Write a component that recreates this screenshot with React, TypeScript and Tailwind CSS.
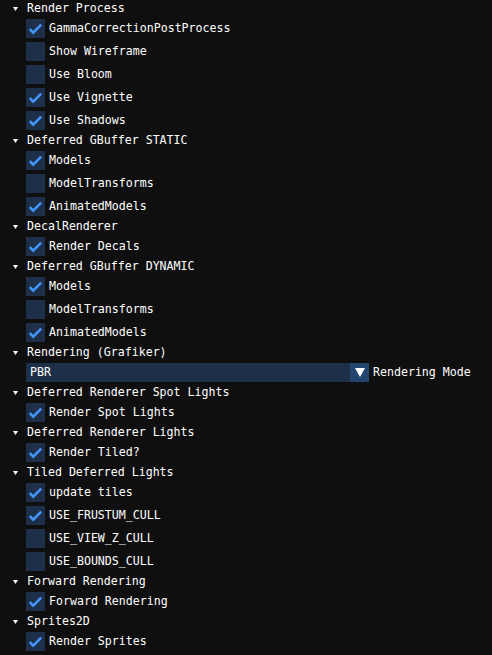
import React from 'react';

type Item =
  | { kind: 'check'; label: string; on: boolean }
  | { kind: 'combo'; value: string; label: string };

type Section = { title: string; items: Item[] };

const SECTIONS: Section[] = [
  {
    title: 'Render Process',
    items: [
      { kind: 'check', label: 'GammaCorrectionPostProcess', on: true },
      { kind: 'check', label: 'Show Wireframe', on: false },
      { kind: 'check', label: 'Use Bloom', on: false },
      { kind: 'check', label: 'Use Vignette', on: true },
      { kind: 'check', label: 'Use Shadows', on: true },
    ],
  },
  {
    title: 'Deferred GBuffer STATIC',
    items: [
      { kind: 'check', label: 'Models', on: true },
      { kind: 'check', label: 'ModelTransforms', on: false },
      { kind: 'check', label: 'AnimatedModels', on: true },
    ],
  },
  { title: 'DecalRenderer', items: [{ kind: 'check', label: 'Render Decals', on: true }] },
  {
    title: 'Deferred GBuffer DYNAMIC',
    items: [
      { kind: 'check', label: 'Models', on: true },
      { kind: 'check', label: 'ModelTransforms', on: false },
      { kind: 'check', label: 'AnimatedModels', on: true },
    ],
  },
  { title: 'Rendering (Grafiker)', items: [{ kind: 'combo', value: 'PBR', label: 'Rendering Mode' }] },
  { title: 'Deferred Renderer Spot Lights', items: [{ kind: 'check', label: 'Render Spot Lights', on: true }] },
  { title: 'Deferred Renderer Lights', items: [{ kind: 'check', label: 'Render Tiled?', on: true }] },
  {
    title: 'Tiled Deferred Lights',
    items: [
      { kind: 'check', label: 'update tiles', on: true },
      { kind: 'check', label: 'USE_FRUSTUM_CULL', on: true },
      { kind: 'check', label: 'USE_VIEW_Z_CULL', on: false },
      { kind: 'check', label: 'USE_BOUNDS_CULL', on: false },
    ],
  },
  { title: 'Forward Rendering', items: [{ kind: 'check', label: 'Forward Rendering', on: true }] },
  { title: 'Sprites2D', items: [{ kind: 'check', label: 'Render Sprites', on: true }] },
];

export default function App() {
  return (
    <div
      className="w-[492px] h-[655px] overflow-hidden bg-[#0f0f0f] text-[#ffffff] flex flex-col gap-[4px] pt-[2px] text-[11.6px] leading-[13px]"
      style={{ fontFamily: "'DejaVu Sans Mono', 'Liberation Mono', monospace" }}
    >
      {SECTIONS.map((s, i) => (
        <React.Fragment key={i}>
          <Header title={s.title} />
          {s.items.map((it, j) =>
            it.kind === 'check' ? (
              <CheckRow key={j} label={it.label} on={it.on} />
            ) : (
              <ComboRow key={j} value={it.value} label={it.label} />
            )
          )}
        </React.Fragment>
      ))}
    </div>
  );
}

function Header({ title }: { title: string }) {
  return (
    <div className="h-[13px] flex items-center shrink-0">
      <div className="w-[27px] flex justify-center pl-[3px]">
        <svg width="5" height="4" viewBox="0 0 5 4">
          <path d="M0 0 L5 0 L2.5 4 Z" fill="#ffffff" />
        </svg>
      </div>
      <span className="whitespace-pre">{title}</span>
    </div>
  );
}

function CheckRow({ label, on }: { label: string; on: boolean }) {
  return (
    <div className="h-[19px] flex items-center pl-[26px] gap-[4px] shrink-0">
      <div className="w-[19px] h-[19px] bg-[#1d2f49] flex items-center justify-center">
        {on && (
          <svg width="19" height="19" viewBox="0 0 19 19">
            <path
              d="M3.8 10.2 L7.2 13.6 L15.2 5.6"
              fill="none"
              stroke="#4296fa"
              strokeWidth="2.6"
            />
          </svg>
        )}
      </div>
      <span className="whitespace-pre">{label}</span>
    </div>
  );
}

function ComboRow({ value, label }: { value: string; label: string }) {
  return (
    <div className="h-[19px] flex items-center pl-[26px] gap-[4px] shrink-0">
      <div className="w-[343px] h-[19px] flex bg-[#1d2f49]">
        <div className="flex-1 flex items-center pl-[4px]">{value}</div>
        <div className="w-[19px] h-[19px] bg-[#24456d] flex items-center justify-center">
          <svg width="10" height="9" viewBox="0 0 10 9">
            <path d="M0 0 L10 0 L5 9 Z" fill="#ffffff" />
          </svg>
        </div>
      </div>
      <span className="whitespace-pre">{label}</span>
    </div>
  );
}
